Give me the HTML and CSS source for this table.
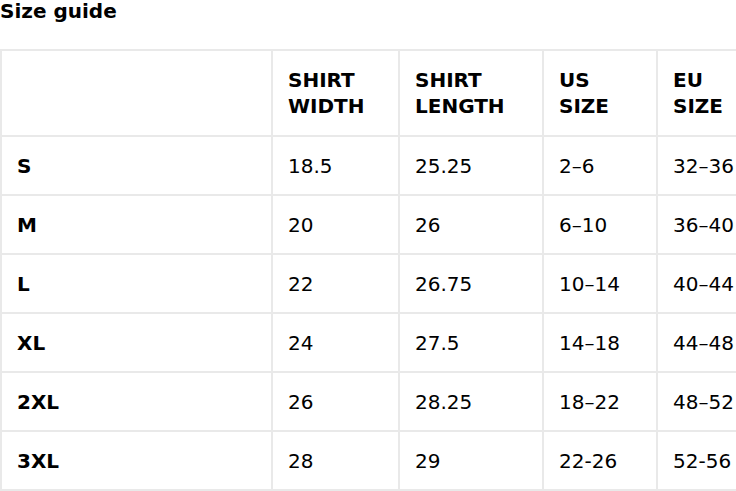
FILE: index.html
```html
<!DOCTYPE html>
<html>
<head>
<meta charset="utf-8">
<link rel="stylesheet" href="styles.css">
</head>
<body>
<h2 class="title">Size guide</h2>
<div class="frame">
<table class="sizes">
  <colgroup>
    <col class="c1"><col class="c2"><col class="c3"><col class="c4"><col class="c5">
  </colgroup>
  <thead>
    <tr><th></th><th>Shirt<br>width</th><th>Shirt<br>length</th><th>US<br>size</th><th>EU<br>size</th></tr>
  </thead>
  <tbody>
    <tr><th>S</th><td>18.5</td><td>25.25</td><td>2–6</td><td>32–36</td></tr>
    <tr><th>M</th><td>20</td><td>26</td><td>6–10</td><td>36–40</td></tr>
    <tr><th>L</th><td>22</td><td>26.75</td><td>10–14</td><td>40–44</td></tr>
    <tr><th>XL</th><td>24</td><td>27.5</td><td>14–18</td><td>44–48</td></tr>
    <tr><th>2XL</th><td>26</td><td>28.25</td><td>18–22</td><td>48–52</td></tr>
    <tr><th>3XL</th><td>28</td><td>29</td><td>22-26</td><td>52-56</td></tr>
  </tbody>
</table>
</div>
</body>
</html>
```
FILE: styles.css
```css
html, body {
  margin: 0;
  padding: 0;
  background: #fff;
  overflow: hidden;
}
body {
  font-family: "DejaVu Sans", sans-serif;
  color: #000;
  width: 736px;
  height: 491px;
}
.title {
  margin: 0;
  font-size: 20px;
  font-weight: bold;
  line-height: 23px;
  height: 49px;
}
.frame {
  width: 736px;
  overflow: hidden;
}
.sizes {
  border-collapse: collapse;
  table-layout: fixed;
  width: 800px;
  font-size: 20px;
  line-height: 26px;
}
.c1 { width: 271px; }
.c2 { width: 127px; }
.c3 { width: 144px; }
.c4 { width: 114px; }
.c5 { width: 144px; }
.sizes th, .sizes td {
  border: 2px solid #e9e9e9;
  padding: 16px 15px 15px;
  text-align: left;
  vertical-align: middle;
}
.sizes thead th { padding-bottom: 16px; text-transform: uppercase; }
.sizes th { font-weight: bold; }
.sizes td { font-weight: normal; }
```
